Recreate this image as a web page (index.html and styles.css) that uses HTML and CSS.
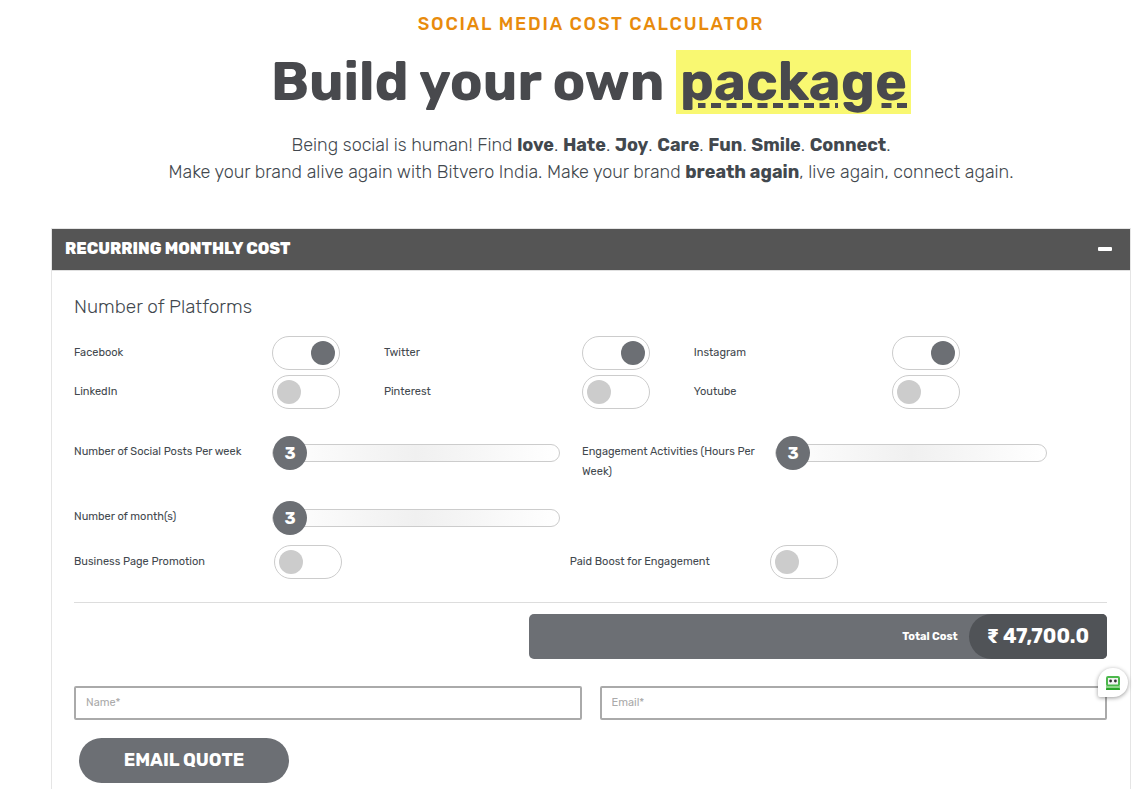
FILE: index.html
```html
<!DOCTYPE html>
<html lang="en">
<head>
<meta charset="utf-8">
<meta name="viewport" content="width=device-width, initial-scale=1">
<title>Social Media Cost Calculator</title>
<link rel="stylesheet" href="styles.css">
</head>
<body>
<main class="page">
  <header class="intro">
    <p class="eyebrow">Social Media Cost Calculator</p>
    <h1 class="title">Build your own <mark class="highlight">package</mark></h1>
    <p class="lead">Being social is human! Find <b>love</b>. <b>Hate</b>. <b>Joy</b>. <b>Care</b>. <b>Fun</b>. <b>Smile</b>. <b>Connect</b>.<br>Make your brand alive again with Bitvero India. Make your brand <b>breath again</b>, live again, connect again.</p>
  </header>

  <section class="panel">
    <h2 class="panel-heading">
      <button class="panel-toggle" type="button" aria-expanded="true">
        <span>RECURRING MONTHLY COST</span>
        <svg class="minus" viewBox="0 0 14 4" aria-hidden="true"><rect width="14" height="4" rx="1" fill="#fff"/></svg>
      </button>
    </h2>
    <form class="panel-body">
      <fieldset class="platforms">
        <legend class="group-title">Number of Platforms</legend>
        <div class="platform-grid">
          <div class="option"><label for="facebook">Facebook</label><input class="switch" type="checkbox" id="facebook" checked></div>
          <div class="option"><label for="twitter">Twitter</label><input class="switch" type="checkbox" id="twitter" checked></div>
          <div class="option"><label for="instagram">Instagram</label><input class="switch" type="checkbox" id="instagram" checked></div>
          <div class="option"><label for="linkedin">LinkedIn</label><input class="switch" type="checkbox" id="linkedin"></div>
          <div class="option"><label for="pinterest">Pinterest</label><input class="switch" type="checkbox" id="pinterest"></div>
          <div class="option"><label for="youtube">Youtube</label><input class="switch" type="checkbox" id="youtube"></div>
        </div>
      </fieldset>

      <div class="slider-grid">
        <div class="slider-row">
          <label for="posts">Number of Social Posts Per week</label>
          <div class="slider"><input type="range" id="posts" min="3" max="30" value="3"><output class="slider-value" for="posts">3</output></div>
        </div>
        <div class="slider-row narrow">
          <label for="hours">Engagement Activities (Hours Per Week)</label>
          <div class="slider"><input type="range" id="hours" min="3" max="40" value="3"><output class="slider-value" for="hours">3</output></div>
        </div>
        <div class="slider-row">
          <label for="months">Number of month(s)</label>
          <div class="slider"><input type="range" id="months" min="3" max="24" value="3"><output class="slider-value" for="months">3</output></div>
        </div>
      </div>

      <div class="extras">
        <div class="option"><label for="promotion">Business Page Promotion</label><input class="switch" type="checkbox" id="promotion"></div>
        <div class="option"><label for="boost">Paid Boost for Engagement</label><input class="switch" type="checkbox" id="boost"></div>
      </div>

      <div class="total-row">
        <div class="total">
          <span class="total-label">Total Cost</span>
          <output class="total-value">₹ 47,700.0</output>
        </div>
      </div>

      <div class="contact">
        <input class="field" type="text" placeholder="Name*" aria-label="Name">
        <div class="field-wrap">
          <input class="field" type="email" placeholder="Email*" aria-label="Email">
          <button class="fill-badge" type="button" aria-label="Fill form">
            <svg class="robot" viewBox="0 0 14 14" aria-hidden="true">
              <rect x="1" y="1" width="12" height="8.6" rx="1" fill="#f2f2f2" stroke="#4cb84c" stroke-width="2"/>
              <circle cx="4.6" cy="5" r="1.4" fill="#333"/>
              <circle cx="9.4" cy="5" r="1.4" fill="#333"/>
              <rect y="10" width="14" height="2" fill="#8fd68a"/>
              <rect y="12" width="14" height="2" rx=".6" fill="#28a428"/>
            </svg>
          </button>
        </div>
      </div>
      <button class="submit" type="submit">EMAIL QUOTE</button>
    </form>
  </section>
</main>
</body>
</html>
```
FILE: styles.css
```css
* { box-sizing: border-box; }

body {
  margin: 0;
  background: #fff;
  color: #42484e;
  font-family: Rubik, Roboto, "Liberation Sans", sans-serif;
}

input, button, output { font-family: inherit; }

.page {
  display: flex;
  flex-direction: column;
  min-height: 100vh;
  padding: 10px 10px 0 51px;
}

.intro {
  text-align: center;
  margin-bottom: 42px;
}

.eyebrow {
  margin: 0 0 12px;
  color: #e88b0c;
  font-size: 18px;
  font-weight: 500;
  line-height: 28px;
  letter-spacing: 0.1em;
  text-transform: uppercase;
}

.title {
  margin: 0 0 18px;
  color: #48494d;
  font-size: 54px;
  font-weight: 700;
  line-height: 64px;
}

.highlight {
  display: inline-block;
  padding: 0 4px;
  background: #f9f871;
  color: inherit;
  text-decoration: underline dashed 5px;
  text-underline-offset: 3px;
}

.lead {
  margin: 0;
  font-size: 18px;
  font-weight: 300;
  line-height: 27px;
}

.lead b { font-weight: 700; }

.panel {
  flex: 1;
  border: 1px solid #e5e5e5;
  border-bottom: 0;
}

.panel-heading {
  margin: 0;
  border-bottom: 1px solid #e0e0e0;
}

.panel-toggle {
  display: flex;
  align-items: center;
  justify-content: space-between;
  width: 100%;
  padding: 0 18px 2px 13px;
  border: 0;
  background: #555;
  color: #fff;
  font-size: 16px;
  font-weight: 800;
  line-height: 39px;
}

.minus {
  width: 14px;
  height: 4px;
}

.panel-body { padding: 22px 23px 6px 22px; }

.platforms {
  margin: 0;
  padding: 0;
  border: 0;
}

.group-title {
  padding: 0;
  font-size: 19px;
  font-weight: 300;
  line-height: 28px;
}

.platform-grid {
  display: grid;
  grid-template-columns: repeat(3, 30%);
  row-gap: 5px;
  padding-top: 15px;
}

.option {
  display: grid;
  grid-template-columns: 198px 68px;
  align-items: center;
  font-size: 11px;
  line-height: 20px;
}

.switch {
  appearance: none;
  display: flex;
  align-items: center;
  width: 68px;
  height: 34px;
  margin: 0;
  padding: 0 4px;
  border: 1px solid #ccc;
  border-radius: 17px;
  background: #fff;
}

.switch::before {
  content: "";
  width: 24px;
  height: 24px;
  border-radius: 50%;
  background: #ccc;
}

.switch:checked { justify-content: flex-end; }

.switch:checked::before { background: #6c6f74; }

.slider-grid {
  display: grid;
  grid-template-columns: 486fr 465fr;
  gap: 19px 22px;
  padding: 27px 60px 0 0;
  font-size: 11px;
  line-height: 20px;
}

.slider-row {
  display: grid;
  grid-template-columns: 198px 1fr;
}

.slider-row.narrow { grid-template-columns: 193px 1fr; }

.slider-row label { padding: 6px 20px 0 0; }

.slider {
  position: relative;
  display: flex;
  align-items: center;
  height: 34px;
}

.slider input {
  appearance: none;
  width: 100%;
  height: 18px;
  margin: 0;
  border: 1px solid #ccc;
  border-radius: 9px;
  background: linear-gradient(90deg, #fff, #f0f0f0 50%, #fff);
}

.slider input::-webkit-slider-thumb {
  appearance: none;
  width: 34px;
  height: 34px;
  border-radius: 50%;
  background: #6c6f74;
}

.slider-value {
  position: absolute;
  left: 1px;
  top: 0;
  width: 34px;
  color: #fff;
  font-size: 17px;
  font-weight: 700;
  line-height: 34px;
  text-align: center;
  pointer-events: none;
}

.extras {
  display: grid;
  grid-template-columns: 48% 48%;
  padding: 10px 0 23px;
}

.extras .option { grid-template-columns: 200px 68px; }

.total-row {
  display: flex;
  justify-content: flex-end;
  padding-top: 11px;
  border-top: 1px solid #ddd;
}

.total {
  display: flex;
  align-items: center;
  justify-content: flex-end;
  width: 56%;
  overflow: hidden;
  border-radius: 5px;
  background: #6c6f74;
  color: #fff;
}

.total-label {
  margin-right: 11px;
  font-size: 11px;
  font-weight: 700;
}

.total-value {
  padding: 0 18px;
  border-radius: 23px 0 0 23px;
  background: #505357;
  font-size: 20px;
  font-weight: 700;
  line-height: 45px;
}

.contact {
  display: grid;
  grid-template-columns: 1fr 1fr;
  gap: 18px;
  padding-top: 27px;
}

.field-wrap { position: relative; }

.field {
  display: block;
  width: 100%;
  height: 34px;
  padding: 0 10px 2px;
  border: 2px solid #aaa;
  border-radius: 2px;
  background: #fff;
  color: #42484e;
  font-size: 11px;
}

.field::placeholder { color: #aaa; }

.fill-badge {
  position: absolute;
  top: -18px;
  right: -21px;
  display: flex;
  align-items: center;
  justify-content: center;
  width: 30px;
  height: 29px;
  padding: 0;
  border: 0;
  border-radius: 15px 15px 15px 2px;
  background: #fff;
  box-shadow: 0 1px 4px rgba(0, 0, 0, .4);
}

.robot {
  width: 14px;
  height: 14px;
}

.submit {
  display: block;
  width: 210px;
  margin: 18px 0 0 5px;
  padding: 0;
  border: 0;
  border-radius: 23px;
  background: #6c6f74;
  color: #fff;
  font-size: 18px;
  font-weight: 700;
  line-height: 45px;
}
```
